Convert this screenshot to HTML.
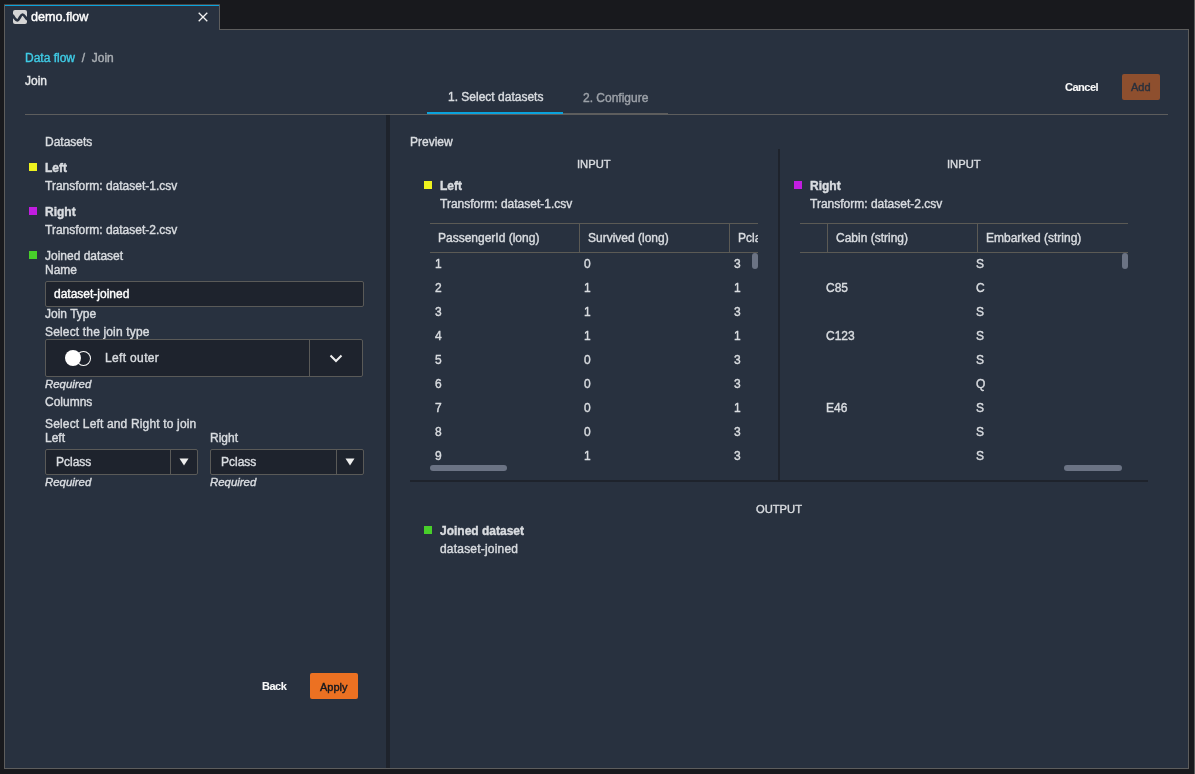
<!DOCTYPE html>
<html><head><meta charset="utf-8">
<style>
*{box-sizing:border-box;margin:0;padding:0}
html,body{width:1195px;height:774px;overflow:hidden;background:#18191d}
body{position:relative;-webkit-text-stroke:0.4px currentColor;font-family:"Liberation Sans",sans-serif;font-size:12px;color:#d9dce0}
.a{position:absolute}
.t{position:absolute;white-space:nowrap;line-height:14px;height:14px}
.b{font-weight:700}
.sq{position:absolute;width:8px;height:8px}
</style></head><body><div id="root" style="position:absolute;left:0;top:0;width:1195px;height:774px;will-change:transform">

<!-- window frame -->
<div class="a" style="left:4px;top:29px;width:1185px;height:740px;background:#28313f;border:1px solid #5d5d5d"></div>
<div class="a" style="left:1194px;top:0;width:1px;height:774px;background:#5d5d5d"></div>

<!-- tab -->
<div class="a" style="left:4px;top:4px;width:216px;height:26px;background:#28313f;border-left:1px solid #5d5d5d;border-right:1px solid #5d5d5d"></div>
<div class="a" style="left:4px;top:4px;width:216px;height:1px;background:#4a4744"></div>
<div class="a" style="left:5px;top:5px;width:214px;height:1px;background:#0ba3dd"></div>
<svg class="a" style="left:13px;top:10px" width="14" height="14" viewBox="0 0 14 14">
<rect x="0" y="0" width="14" height="14" rx="2" fill="#d5d5d5"/>
<path d="M-0.5 5 C1.2 8, 2.5 10.3, 4.3 10.3 C6.4 10.3, 7.4 4.5, 9.4 4.5 C11.2 4.5, 12.3 7.6, 14.5 9.6" fill="none" stroke="#28313f" stroke-width="2.7"/>
</svg>
<div class="t" style="left:31px;top:10px;font-size:12.6px;color:#fff">demo.flow</div>
<svg class="a" style="left:198px;top:12px" width="10" height="10" viewBox="0 0 10 10">
<path d="M0.7 0.7 L9.3 9.3 M9.3 0.7 L0.7 9.3" stroke="#f2f2f2" stroke-width="1.3"/>
</svg>

<!-- header -->
<div class="t" style="left:25px;top:51px"><span style="color:#3fcbe5">Data flow</span><span style="color:#a9aeb3">&nbsp;&nbsp;/ &nbsp;Join</span></div>
<div class="t" style="left:25px;top:74px;color:#e6e8ea">Join</div>

<div class="t" style="left:448px;top:90px">1. Select datasets</div>
<div class="t" style="left:583px;top:91px;color:#9ca1a8">2. Configure</div>
<div class="a" style="left:427px;top:113px;width:241px;height:2px;background:#5d5d5d"></div>
<div class="a" style="left:427px;top:112px;width:136px;height:2px;background:#0ba3dd"></div>
<div class="a" style="left:25px;top:114px;width:1143px;height:1px;background:#5d5d5d"></div>

<div class="t b" style="left:1065px;top:80px;font-size:11px;letter-spacing:-0.5px;color:#f8f8f8;-webkit-text-stroke:0.1px #f8f8f8">Cancel</div>
<div class="a" style="left:1122px;top:74px;width:38px;height:26px;background:#8e4f2e;border-radius:2px"></div>
<div class="t" style="left:1131px;top:80px;font-size:11px;color:#2a303c">Add</div>

<!-- vertical divider -->
<div class="a" style="left:386px;top:115px;width:4px;height:653px;background:#1e232c"></div>


<!-- left form -->
<div class="t" style="left:45px;top:135px">Datasets</div>
<div class="sq" style="left:29px;top:163px;background:#eef21e"></div>
<div class="t b" style="left:45px;top:161px">Left</div>
<div class="t" style="left:45px;top:179px">Transform: dataset-1.csv</div>
<div class="sq" style="left:29px;top:207px;background:#c11de0"></div>
<div class="t b" style="left:45px;top:205px">Right</div>
<div class="t" style="left:45px;top:223px">Transform: dataset-2.csv</div>
<div class="sq" style="left:29px;top:251px;background:#48cf2a"></div>
<div class="t" style="left:45px;top:249px">Joined dataset</div>
<div class="t" style="left:45px;top:263px">Name</div>
<div class="a" style="left:45px;top:281px;width:319px;height:26px;background:#1e232d;border:1px solid #5a5a58;border-radius:2px"></div>
<div class="t" style="left:54px;top:287px;color:#fff">dataset-joined</div>
<div class="t" style="left:45px;top:307px">Join Type</div>
<div class="t" style="left:45px;top:325px;letter-spacing:0.16px">Select the join type</div>
<div class="a" style="left:45px;top:339px;width:318px;height:38px;background:#1e232d;border:1px solid #5a5a58;border-radius:2px"></div>
<div class="a" style="left:309px;top:340px;width:1px;height:36px;background:#5a5a58"></div>
<div class="a" style="left:65px;top:350px;width:16px;height:16px;border-radius:50%;background:#fff"></div>
<div class="a" style="left:76px;top:350.5px;width:15px;height:15px;border-radius:50%;border:1px solid #fff;border-left-color:transparent"></div>
<div class="t" style="left:105px;top:351px;letter-spacing:0.35px">Left outer</div>
<svg class="a" style="left:329px;top:354px" width="14" height="9" viewBox="0 0 14 9"><path d="M1.5 1.5 L7 7 L12.5 1.5" fill="none" stroke="#eee" stroke-width="2"/></svg>
<div class="t" style="left:45px;top:377px;font-style:italic;font-size:11.4px">Required</div>
<div class="t" style="left:45px;top:395px">Columns</div>
<div class="t" style="left:45px;top:417px;letter-spacing:0.16px">Select Left and Right to join</div>
<div class="t" style="left:45px;top:431px">Left</div>
<div class="t" style="left:210px;top:431px">Right</div>
<div class="a" style="left:45px;top:449px;width:153px;height:26px;background:#1e232d;border:1px solid #5a5a58;border-radius:2px"></div>
<div class="a" style="left:170px;top:450px;width:1px;height:24px;background:#5a5a58"></div>
<svg class="a" style="left:179px;top:458px" width="10" height="8" viewBox="0 0 10 8"><path d="M0.5 0.5 L9.5 0.5 L5 7.5 Z" fill="#eee"/></svg>
<div class="t" style="left:56px;top:455px">Pclass</div>
<div class="a" style="left:210px;top:449px;width:154px;height:26px;background:#1e232d;border:1px solid #5a5a58;border-radius:2px"></div>
<div class="a" style="left:336px;top:450px;width:1px;height:24px;background:#5a5a58"></div>
<svg class="a" style="left:345px;top:458px" width="10" height="8" viewBox="0 0 10 8"><path d="M0.5 0.5 L9.5 0.5 L5 7.5 Z" fill="#eee"/></svg>
<div class="t" style="left:221px;top:455px">Pclass</div>
<div class="t" style="left:45px;top:475px;font-style:italic;font-size:11.4px">Required</div>
<div class="t" style="left:210px;top:475px;font-style:italic;font-size:11.4px">Required</div>

<div class="t b" style="left:262px;top:679px;font-size:11px;letter-spacing:-0.5px;color:#f8f8f8;-webkit-text-stroke:0.1px #f8f8f8">Back</div>
<div class="a" style="left:310px;top:673px;width:48px;height:26px;background:#ec7122;border-radius:2px"></div>
<div class="t" style="left:320px;top:680px;font-size:11px;color:#16191f">Apply</div>


<!-- preview -->
<div class="t" style="left:410px;top:135px">Preview</div>
<div class="t" style="left:577px;top:157px;font-size:11.2px">INPUT</div>
<div class="sq" style="left:424px;top:181px;background:#eef21e"></div>
<div class="t b" style="left:440px;top:179px">Left</div>
<div class="t" style="left:440px;top:197px">Transform: dataset-1.csv</div>
<div class="a" style="left:430px;top:223px;width:328px;height:1px;background:#5b5a55"></div>
<div class="a" style="left:430px;top:252px;width:328px;height:1px;background:#5b5a55"></div>
<div class="a" style="left:579px;top:224px;width:1px;height:28px;background:#5b5a55"></div>
<div class="a" style="left:729px;top:224px;width:1px;height:28px;background:#5b5a55"></div>
<div class="a" style="left:430px;top:224px;width:328px;height:28px;overflow:hidden">
<div class="t" style="left:8px;top:7px">PassengerId (long)</div>
<div class="t" style="left:158px;top:7px">Survived (long)</div>
<div class="t" style="left:308px;top:7px">Pclass (long)</div>
</div>
<div class="t" style="left:435px;top:257px">1</div><div class="t" style="left:584px;top:257px">0</div><div class="t" style="left:734px;top:257px">3</div>
<div class="t" style="left:435px;top:281px">2</div><div class="t" style="left:584px;top:281px">1</div><div class="t" style="left:734px;top:281px">1</div>
<div class="t" style="left:435px;top:305px">3</div><div class="t" style="left:584px;top:305px">1</div><div class="t" style="left:734px;top:305px">3</div>
<div class="t" style="left:435px;top:329px">4</div><div class="t" style="left:584px;top:329px">1</div><div class="t" style="left:734px;top:329px">1</div>
<div class="t" style="left:435px;top:353px">5</div><div class="t" style="left:584px;top:353px">0</div><div class="t" style="left:734px;top:353px">3</div>
<div class="t" style="left:435px;top:377px">6</div><div class="t" style="left:584px;top:377px">0</div><div class="t" style="left:734px;top:377px">3</div>
<div class="t" style="left:435px;top:401px">7</div><div class="t" style="left:584px;top:401px">0</div><div class="t" style="left:734px;top:401px">1</div>
<div class="t" style="left:435px;top:425px">8</div><div class="t" style="left:584px;top:425px">0</div><div class="t" style="left:734px;top:425px">3</div>
<div class="t" style="left:435px;top:449px">9</div><div class="t" style="left:584px;top:449px">1</div><div class="t" style="left:734px;top:449px">3</div>

<div class="a" style="left:752px;top:253px;width:6px;height:16px;background:#6b7384;border-radius:3px"></div>
<div class="a" style="left:430px;top:465px;width:77px;height:6px;background:#6b7384;border-radius:3px"></div>

<div class="a" style="left:778px;top:149px;width:2px;height:331px;background:#1e232c"></div>

<div class="t" style="left:947px;top:157px;font-size:11.2px">INPUT</div>
<div class="sq" style="left:794px;top:181px;background:#c11de0"></div>
<div class="t b" style="left:810px;top:179px">Right</div>
<div class="t" style="left:810px;top:197px">Transform: dataset-2.csv</div>
<div class="a" style="left:800px;top:223px;width:328px;height:1px;background:#5b5a55"></div>
<div class="a" style="left:800px;top:252px;width:328px;height:1px;background:#5b5a55"></div>
<div class="a" style="left:827px;top:224px;width:1px;height:28px;background:#5b5a55"></div>
<div class="a" style="left:977px;top:224px;width:1px;height:28px;background:#5b5a55"></div>
<div class="a" style="left:800px;top:224px;width:328px;height:28px;overflow:hidden">
<div class="t" style="left:36px;top:7px">Cabin (string)</div>
<div class="t" style="left:186px;top:7px">Embarked (string)</div>
</div>
<div class="t" style="left:976px;top:257px">S</div>
<div class="t" style="left:826px;top:281px">C85</div><div class="t" style="left:976px;top:281px">C</div>
<div class="t" style="left:976px;top:305px">S</div>
<div class="t" style="left:826px;top:329px">C123</div><div class="t" style="left:976px;top:329px">S</div>
<div class="t" style="left:976px;top:353px">S</div>
<div class="t" style="left:976px;top:377px">Q</div>
<div class="t" style="left:826px;top:401px">E46</div><div class="t" style="left:976px;top:401px">S</div>
<div class="t" style="left:976px;top:425px">S</div>
<div class="t" style="left:976px;top:449px">S</div>

<div class="a" style="left:1122px;top:253px;width:6px;height:16px;background:#6b7384;border-radius:3px"></div>
<div class="a" style="left:1064px;top:465px;width:58px;height:6px;background:#6b7384;border-radius:3px"></div>

<div class="a" style="left:410px;top:480px;width:738px;height:2px;background:#1e232c"></div>

<div class="t" style="left:756px;top:502px;font-size:11.2px">OUTPUT</div>
<div class="sq" style="left:424px;top:526px;background:#48cf2a"></div>
<div class="t b" style="left:440px;top:524px">Joined dataset</div>
<div class="t" style="left:440px;top:542px;letter-spacing:0.2px">dataset-joined</div>

</div></body></html>
